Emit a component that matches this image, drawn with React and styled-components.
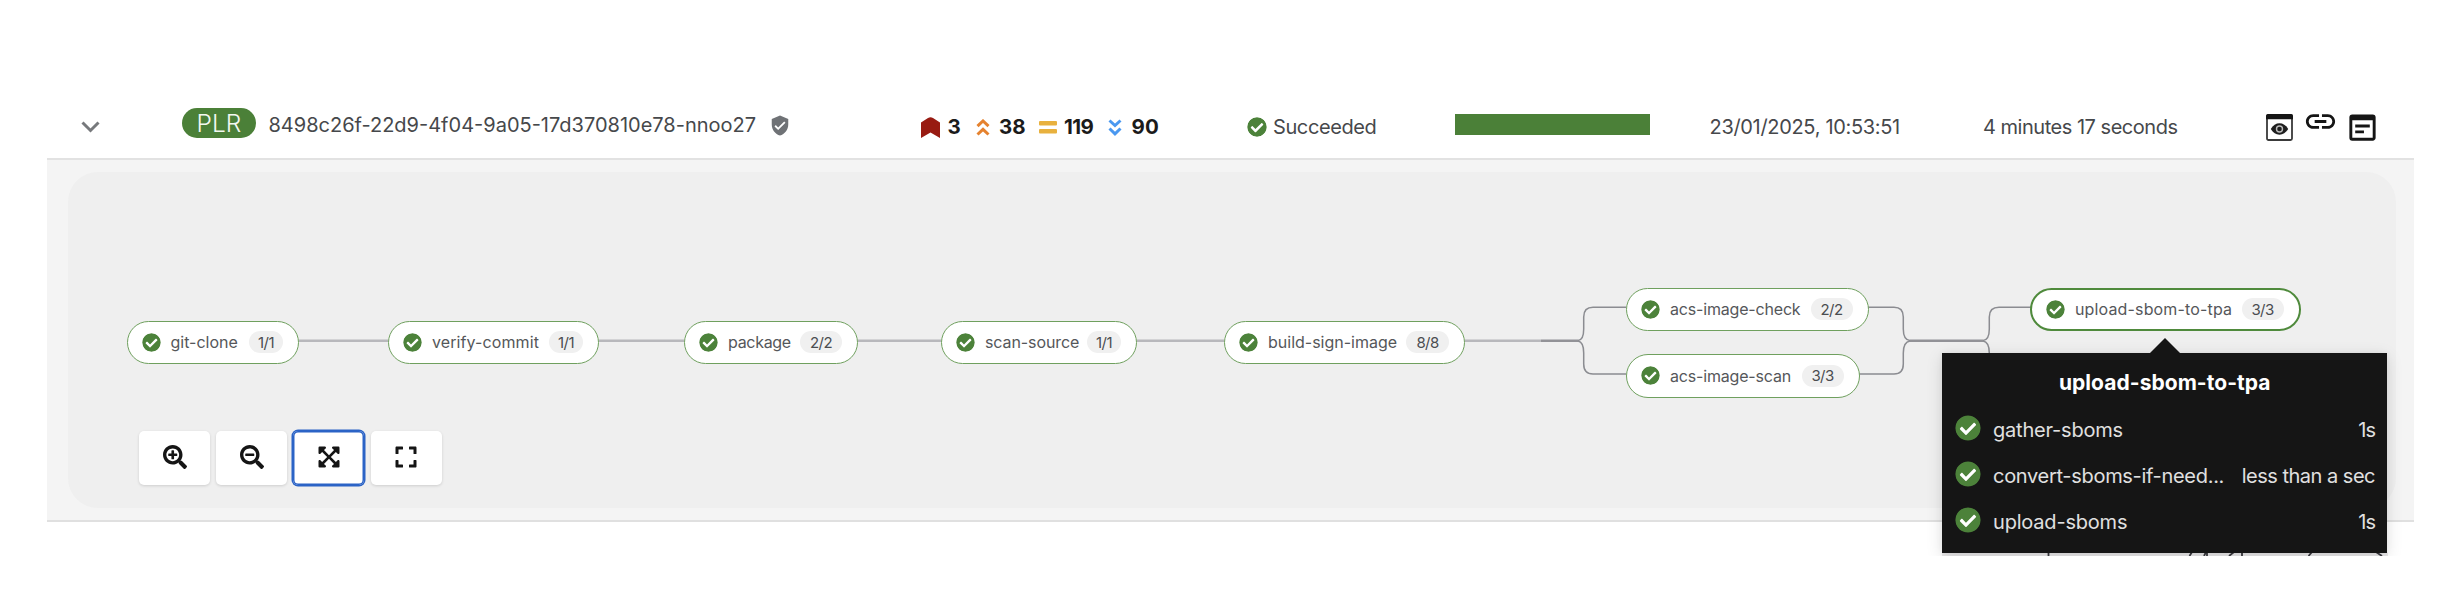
import React from "react";
import styled, { createGlobalStyle } from "styled-components";
import {
  FaSearchPlus,
  FaSearchMinus,
  FaExpandArrowsAlt,
  FaExpand,
  FaCheckCircle,
} from "react-icons/fa";
import { MdVerifiedUser, MdLink, MdWysiwyg } from "react-icons/md";

const GlobalStyle = createGlobalStyle`
  * { box-sizing: border-box; }
  body {
    margin: 0;
    background: #fff;
    font-family: Inter, "Open Sans", sans-serif;
    color: #46484b;
  }
  svg { display: block; flex: none; }
`;

const Frame = styled.main`
  position: relative;
  width: 2440px;
  height: 556px;
  padding: 0 26px 0 47px;
  overflow: hidden;
`;

const RunRow = styled.header`
  display: grid;
  grid-template-columns: 135px 739px 326px 207.5px 255px 273.5px 283px 1fr;
  align-items: start;
  height: 160px;
  padding-top: 96px;
  border-bottom: 2px solid #e2e2e2;
`;

const Cell = styled.div`
  display: flex;
  align-items: center;
  height: ${(p) => p.$height || 62}px;
  padding-left: ${(p) => p.$indent || 0}px;
`;

const Label = styled.span`
  font-size: ${(p) => p.$size || 20}px;
  font-weight: ${(p) => p.$weight || 400};
  letter-spacing: ${(p) => p.$track || 0}px;
  line-height: 24px;
  white-space: nowrap;
`;

const RunName = styled(Label)`
  padding-top: 3px;
`;

const Badge = styled.span`
  display: flex;
  align-items: center;
  justify-content: center;
  width: 74px;
  height: 30px;
  margin-right: 12.5px;
  border-radius: 15px;
  background: #4b8038;
  color: #f4f8f1;
  font-size: 24.5px;
  font-weight: 300;
`;

const Shield = styled(MdVerifiedUser)`
  width: 22px;
  height: 23px;
  margin: 4px 0 0 13px;
  color: #6f7276;
`;

const Severity = styled.div`
  display: flex;
  align-items: center;
  width: ${(p) => p.$width}px;
  color: #1b1b1b;
`;

const SeverityIcon = styled.span`
  width: ${(p) => p.$width}px;
`;

const Check = styled(FaCheckCircle)`
  width: ${(p) => p.$size}px;
  height: ${(p) => p.$size}px;
  flex: none;
  border-radius: 50%;
  background: radial-gradient(#fff 60%, transparent 62%);
  color: #4c823a;
`;

const StatusCell = styled(Cell)`
  gap: 6px;
`;

const ProgressBar = styled.div`
  width: 195.5px;
  height: 20.5px;
  margin-top: 18px;
  background: #4b8038;
`;

const Actions = styled.div`
  display: flex;
  align-items: center;
  height: 62px;
  color: #151515;
`;

const LinkIcon = styled(MdLink)`
  width: 35px;
  height: 35px;
  margin: -12px 6.5px 0 10px;
`;

const NoteIcon = styled(MdWysiwyg)`
  width: 35px;
  height: 35px;
`;

const Panel = styled.section`
  height: 362px;
  padding: 12px 18px 12px 21px;
  background: #f4f4f4;
  border-bottom: 2px solid #e0e0e0;
`;

const Canvas = styled.div`
  position: relative;
  display: flex;
  align-items: flex-end;
  height: 336px;
  padding: 0 0 23.5px 71px;
  border-radius: 30px;
  background: #efefef;
`;

const Edges = styled.svg`
  position: absolute;
  left: 0;
  top: 0;
`;

const Node = styled.div`
  position: absolute;
  left: ${(p) => p.$x}px;
  top: ${(p) => p.$y}px;
  display: flex;
  align-items: center;
  justify-content: space-between;
  width: ${(p) => p.$w}px;
  height: 43.5px;
  padding: 0 15px 0 14px;
  border: ${(p) => (p.$active ? "2px solid #4f8a3c" : "1.5px solid #6fa05e")};
  border-radius: 22px;
  background: #fff;
`;

const NodeTitle = styled.div`
  display: flex;
  align-items: center;
  gap: 10px;
  color: #55575a;
`;

const Steps = styled.span`
  display: flex;
  align-items: center;
  justify-content: center;
  width: ${(p) => p.$w}px;
  height: 22px;
  border-radius: 11px;
  background: #f0f0f0;
  color: #4b4d50;
  font-size: 15px;
  letter-spacing: -0.6px;
`;

const Toolbar = styled.div`
  position: relative;
  display: flex;
  gap: 6.2px;
`;

const ToolButton = styled.button`
  display: flex;
  align-items: center;
  justify-content: center;
  width: 71px;
  height: 54px;
  padding: 0 0 2px;
  border: 0;
  border-radius: 5px;
  background: #fff;
  color: #151515;
  box-shadow: ${(p) =>
    p.$active ? "0 0 0 1.5px #2b63c6, inset 0 0 0 1.5px #2b63c6" : "0 1px 3px rgba(0,0,0,.14)"};
`;

const Tooltip = styled.aside`
  position: absolute;
  left: 1942px;
  top: 353px;
  width: 445px;
  height: 200px;
  padding: 18px 12px 0 12.5px;
  background: #151515;
  color: #fff;
  box-shadow: 0 4px 16px rgba(0, 0, 0, 0.12), 0 0 6px rgba(0, 0, 0, 0.06);

  &::before {
    content: "";
    position: absolute;
    left: 207.5px;
    top: -15.5px;
    border: 15.5px solid transparent;
    border-top: 0;
    border-bottom-color: #151515;
  }
`;

const TooltipTitle = styled.div`
  display: flex;
  justify-content: center;
  height: 34px;
`;

const StepRow = styled.div`
  display: flex;
  align-items: center;
  height: 46px;
  color: #e0e0e0;
`;

const StepName = styled.div`
  flex: 1;
  padding: 4px 0 0 12.5px;
`;

const StepTime = styled.div`
  padding-top: 4px;
`;

const Peek = styled.svg`
  position: absolute;
  left: 1942px;
  top: 552px;
`;

const RowToggle = () => (
  <svg width="19" height="12" viewBox="0 0 19 12">
    <path d="M1.500 1.500 9.500 9.500 17.500 1.500" fill="none" stroke="#77797c" strokeWidth="3" />
  </svg>
);

const Flag = () => (
  <svg width="19" height="21" viewBox="0 0 19 21">
    <path d="M0 5.5 L7 1 Q9.5 -.5 12 1 L19 5.5 V21 L9.5 15.5 L0 21Z" fill="#981b12" />
  </svg>
);

const Chevrons = ({ color, down }) => (
  <svg width="14" height="17" viewBox="0 0 14 17">
    <path
      d={down ? "M1.5 1.5 7 6.5 12.5 1.5M1.5 9.5 7 14.8 12.5 9.5" : "M1.5 7.2 7 2 12.5 7.2M1.5 15.5 7 10.3 12.5 15.5"}
      fill="none"
      stroke={color}
      strokeWidth="3"
    />
  </svg>
);

const Equals = () => (
  <svg width="18" height="13" viewBox="0 0 18 13">
    <rect width="18" height="4.4" rx="1" fill="#e8b13e" />
    <rect y="8" width="18" height="4.4" rx="1" fill="#e8b13e" />
  </svg>
);

const PreviewIcon = () => (
  <svg width="27" height="27" viewBox="0 0 27 27">
    <rect x="1" y="1" width="25" height="25" rx="1.5" fill="#fff" stroke="#3a3a3a" strokeWidth="1.8" />
    <path d="M2 0h23a2 2 0 0 1 2 2v3.2H0V2a2 2 0 0 1 2-2Z" fill="#151515" />
    <path d="M4.8 15C7 11.3 10 9.3 13.5 9.3S20 11.3 22.2 15C20 18.7 17 20.7 13.5 20.7S7 18.7 4.8 15Z" fill="#1f1f1f" />
    <circle cx="13.5" cy="15" r="3" fill="none" stroke="#bdbdbd" strokeWidth="1.4" />
  </svg>
);

const severities = [
  { icon: <Flag />, iconWidth: 26.5, width: 55, count: "3" },
  { icon: <Chevrons color="#e5822f" />, iconWidth: 23, width: 63, count: "38", track: 0 },
  { icon: <Equals />, iconWidth: 25, width: 69, count: "119", track: -0.6 },
  { icon: <Chevrons color="#4a98f0" down />, iconWidth: 23.5, width: 60, count: "90", track: 0.3 },
];

const nodes = [
  { x: 58.5, y: 148.5, w: 172.5, name: "git-clone", track: 0, steps: "1/1", stepsW: 34 },
  { x: 320, y: 148.5, w: 211, name: "verify-commit", track: 0.1, steps: "1/1", stepsW: 34 },
  { x: 616, y: 148.5, w: 174, name: "package", track: -0.3, steps: "2/2", stepsW: 42 },
  { x: 873, y: 148.5, w: 196, name: "scan-source", track: -0.1, steps: "1/1", stepsW: 34 },
  { x: 1156, y: 148.5, w: 241, name: "build-sign-image", track: 0, steps: "8/8", stepsW: 43 },
  { x: 1558, y: 115.5, w: 242.5, name: "acs-image-check", track: -0.18, steps: "2/2", stepsW: 42 },
  { x: 1558, y: 182, w: 233.5, name: "acs-image-scan", track: -0.18, steps: "3/3", stepsW: 42 },
  { x: 1962, y: 115.5, w: 270.5, name: "upload-sbom-to-tpa", track: 0.15, steps: "3/3", stepsW: 42, active: true },
];

const tools = [
  { name: "Zoom in", icon: <FaSearchPlus size={24} /> },
  { name: "Zoom out", icon: <FaSearchMinus size={24} /> },
  { name: "Fit to screen", icon: <FaExpandArrowsAlt size={24} />, active: true },
  { name: "Reset view", icon: <FaExpand size={24} /> },
];

const steps = [
  { name: "gather-sboms", track: -0.2, time: "1s", timeTrack: -1 },
  { name: "convert-sboms-if-need...", track: -0.3, time: "less than a sec", timeTrack: -0.5 },
  { name: "upload-sboms", track: -0.2, time: "1s", timeTrack: -1 },
];

export default function App() {
  return (
    <>
      <GlobalStyle />
      <Frame>
        <RunRow>
          <Cell $indent={34}>
            <RowToggle />
          </Cell>
          <Cell $height={54}>
            <Badge>PLR</Badge>
            <RunName>8498c26f-22d9-4f04-9a05-17d370810e78-nnoo27</RunName>
            <Shield />
          </Cell>
          <Cell>
            {severities.map((s) => (
              <Severity key={s.count} $width={s.width}>
                <SeverityIcon $width={s.iconWidth}>{s.icon}</SeverityIcon>
                <Label $size={20.5} $weight={700} $track={s.track}>{s.count}</Label>
              </Severity>
            ))}
          </Cell>
          <StatusCell>
            <Check $size={20} />
            <Label $track={-0.4}>Succeeded</Label>
          </StatusCell>
          <ProgressBar />
          <Cell>
            <Label $track={-0.32}>23/01/2025, 10:53:51</Label>
          </Cell>
          <Cell>
            <Label $track={-0.48}>4 minutes 17 seconds</Label>
          </Cell>
          <Actions>
            <PreviewIcon />
            <LinkIcon />
            <NoteIcon />
          </Actions>
        </RunRow>
        <Panel>
          <Canvas>
            <Edges width="2328" height="336" fill="none" stroke="#8b8c91" strokeWidth="1.5">
              <path d="M231 168.8H320M531 168.8H616M790 168.8H873M1069 168.8H1156M1397 168.8H1473" stroke="#b8b8bc" strokeWidth="2.6" />
              <path d="M1473 168.8H1510M1842 168.8H1915" stroke="#929297" strokeWidth="2.6" />
              <path d="M1510 168.5Q1515.7 168 1515.7 157V145Q1515.7 135.3 1525 135.3H1558" />
              <path d="M1510 169Q1515.7 170 1515.7 181V192Q1515.7 202 1525 202H1558" />
              <path d="M1800 135.3H1826Q1835.3 135.3 1835.3 145V157Q1835.3 168 1842 168.5" />
              <path d="M1791 202H1826Q1835.3 202 1835.3 192V181Q1835.3 170 1842 169" />
              <path d="M1915 168.5Q1921.3 168 1921.3 157V145Q1921.3 135.3 1931 135.3H1963" />
              <path d="M1915 169Q1921.3 170 1921.3 181V192" />
            </Edges>
            {nodes.map((n) => (
              <Node key={n.name} $x={n.x} $y={n.y} $w={n.w} $active={n.active}>
                <NodeTitle>
                  <Check $size={19} />
                  <Label $size={16} $track={n.track}>{n.name}</Label>
                </NodeTitle>
                <Steps $w={n.stepsW}>{n.steps}</Steps>
              </Node>
            ))}
            <Toolbar>
              {tools.map((t) => (
                <ToolButton key={t.name} aria-label={t.name} $active={t.active}>
                  {t.icon}
                </ToolButton>
              ))}
            </Toolbar>
          </Canvas>
        </Panel>
        <Peek width="460" height="4" fill="none" stroke="#3a3a3f" strokeWidth="1.8">
          <path d="M0 2.5H446" stroke="#e9e8e9" strokeWidth="4" />
          <path d="M106.5 0V4M250 0 247.5 4M265 0V4M264 0 262 4M292 0 287 4M300 0V4M370 0 366.5 4M434 0 440 4" />
        </Peek>
        <Tooltip>
          <TooltipTitle>
            <Label $size={21} $weight={700} $track={0.05}>upload-sbom-to-tpa</Label>
          </TooltipTitle>
          {steps.map((s) => (
            <StepRow key={s.name}>
              <Check $size={26} />
              <StepName>
                <Label $track={s.track}>{s.name}</Label>
              </StepName>
              <StepTime>
                <Label $track={s.timeTrack}>{s.time}</Label>
              </StepTime>
            </StepRow>
          ))}
        </Tooltip>
      </Frame>
    </>
  );
}
